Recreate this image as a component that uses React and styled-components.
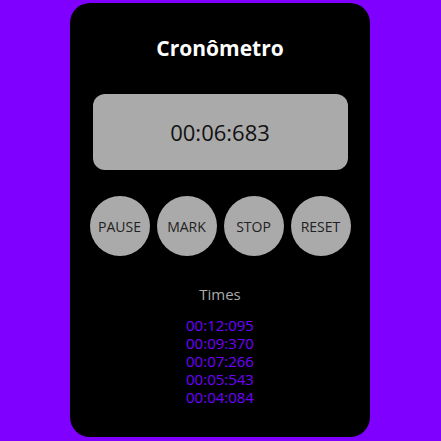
import React from 'react';
import styled, { createGlobalStyle } from 'styled-components';

const GlobalStyle = createGlobalStyle`
  html, body {
    margin: 0;
    padding: 0;
    background-color: #8000ff;
    font-family: "Open Sans", "Noto Sans", sans-serif;
  }
`;

const Page = styled.div`
  width: 440px;
  display: flex;
  justify-content: center;
  padding-top: 3px;
  min-height: 441px;
  box-sizing: border-box;
`;

const Card = styled.div`
  width: 300px;
  height: 434px;
  box-sizing: border-box;
  background-color: #000;
  border-radius: 20px;
  display: flex;
  flex-direction: column;
  align-items: center;
  padding-top: 31px;
`;

const Title = styled.h1`
  margin: 0;
  font-size: 21px;
  line-height: 28px;
  font-weight: 700;
  color: #fff;
`;

const Display = styled.div`
  margin-top: 32px;
  width: 255px;
  height: 76px;
  border-radius: 12px;
  background-color: #aaa;
  display: flex;
  align-items: center;
  justify-content: center;
  font-size: 22px;
  color: #111;
`;

const Controls = styled.div`
  margin-top: 26px;
  display: flex;
  gap: 7px;
`;

const RoundButton = styled.button`
  width: 60px;
  height: 60px;
  border-radius: 50%;
  border: none;
  padding: 0;
  background-color: #aaa;
  color: #222;
  font-family: inherit;
  font-size: 14px;
  cursor: pointer;
`;

const SectionLabel = styled.div`
  margin-top: 28px;
  font-size: 15px;
  line-height: 20px;
  color: #aaa;
`;

const TimeList = styled.ul`
  list-style: none;
  margin: 12px 0 0;
  padding: 0;
  text-align: center;
`;

const TimeItem = styled.li`
  font-size: 15px;
  line-height: 18px;
  color: #7000ff;
`;

const marks = ['00:12:095', '00:09:370', '00:07:266', '00:05:543', '00:04:084'];

const App = () => (
  <>
    <GlobalStyle />
    <Page>
      <Card>
        <Title>Cronômetro</Title>
        <Display>00:06:683</Display>
        <Controls>
          <RoundButton>PAUSE</RoundButton>
          <RoundButton>MARK</RoundButton>
          <RoundButton>STOP</RoundButton>
          <RoundButton>RESET</RoundButton>
        </Controls>
        <SectionLabel>Times</SectionLabel>
        <TimeList>
          {marks.map((t) => (
            <TimeItem key={t}>{t}</TimeItem>
          ))}
        </TimeList>
      </Card>
    </Page>
  </>
);

export default App;
